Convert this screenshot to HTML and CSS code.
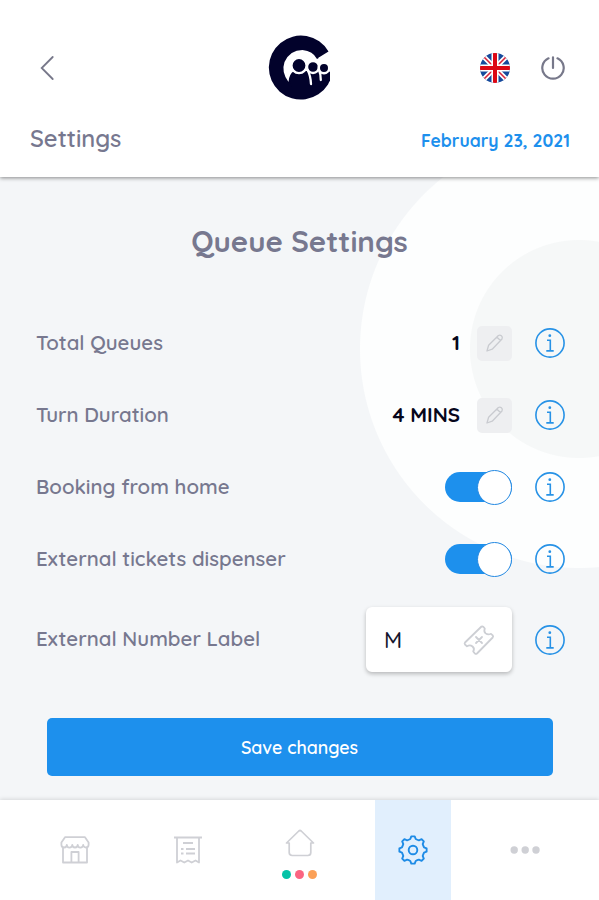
FILE: index.html
```html
<!DOCTYPE html>
<html lang="en">
<head>
  <meta charset="UTF-8" />
  <meta name="viewport" content="width=device-width, initial-scale=1.0"/>
  <title>Queue Settings</title>
  <link rel="stylesheet" href="styles.css">
</head>
<body>
  <!-- shared icons -->
  <svg class="sprite" width="0" height="0">
    <symbol id="icon-info" viewBox="0 0 30 30">
      <circle cx="15" cy="15" r="14.1" fill="none" stroke="currentColor" stroke-width="1.6"/>
      <circle cx="14.8" cy="7.7" r="1.4" fill="currentColor"/>
      <path d="M12 12.2h3.3v10.5M11.3 22.9h7.4" fill="none" stroke="currentColor" stroke-width="1.6"/>
    </symbol>
    <symbol id="icon-pencil" viewBox="0 0 20 20">
      <path d="M2 18l1.6-5.7L13.4 2.5q1.5-1 3 .3t.6 3.2L7.2 16.2zM12 4.2l3.7 3.6" fill="none" stroke="currentColor" stroke-width="1.3" stroke-linejoin="round"/>
    </symbol>
  </svg>

  <header class="header">
    <div class="topbar">
      <button class="icon-btn back">
        <svg width="14" height="26" viewBox="0 0 14 26"><path d="M12.7 2L1.7 13l11 11" fill="none" stroke="currentColor" stroke-width="1.8" stroke-linecap="round"/></svg>
      </button>
      <svg class="logo" width="64" height="66" viewBox="0 0 64 66">
        <path d="M60.5 16.5A32 32 0 1 0 60 49.5L62 45L61 39L62 31L50 23Z" fill="#02022b"/>
        <path d="M20.5 47Q13 37 16.5 27Q22 15 34.5 15Q45 16 49 24L64 16V36H26Q21 39 20.5 47Z" fill="#fff"/>
        <path d="M22 46Q23 39 31 39.5Q37 40 41 38L50 37L62 37V46L50 52H24Z" fill="#02022b"/>
        <g fill="#02022b" stroke="#fff" stroke-width="2.4">
          <circle cx="31" cy="30.5" r="7.6"/>
          <circle cx="45" cy="32" r="6"/>
          <circle cx="56" cy="33" r="5.2"/>
        </g>
        <path d="M39.5 35Q42.5 40 43 49M51 35Q52.8 39 52.8 45" fill="none" stroke="#fff" stroke-width="2.3" stroke-linecap="round"/>
      </svg>
      <div class="actions">
        <svg width="30" height="30" viewBox="0 0 30 30">
          <clipPath id="round"><circle cx="15" cy="15" r="15"/></clipPath>
          <g clip-path="url(#round)">
            <path d="M0 0h30v30H0z" fill="#164a9c"/>
            <path d="M2 2l26 26M28 2L2 28" stroke="#fff" stroke-width="5"/>
            <path d="M2 2l26 26M28 2L2 28" stroke="#d8253a" stroke-width="1.6"/>
            <path d="M15 0v30M0 15h30" stroke="#fff" stroke-width="7"/>
            <path d="M15 0v30M0 15h30" stroke="#dc0714" stroke-width="4"/>
          </g>
        </svg>
        <button class="icon-btn">
          <svg width="24" height="24" viewBox="0 0 24 24" fill="none" stroke="currentColor" stroke-width="2.2" stroke-linecap="round"><path d="M7.5 2.3a10.7 10.7 0 1 0 9 0M12 1.3v10.7"/></svg>
        </button>
      </div>
    </div>
    <div class="subbar">
      <span class="page-name">Settings</span>
      <span class="date">February 23, 2021</span>
    </div>
  </header>

  <main class="content">
    <h1>Queue Settings</h1>
    <div class="rows">
      <div class="row">
        <span class="label">Total Queues</span>
        <b class="value">1</b>
        <button class="edit"><svg width="20" height="20"><use href="#icon-pencil"/></svg></button>
        <svg class="info" width="30" height="30"><use href="#icon-info"/></svg>
      </div>
      <div class="row">
        <span class="label">Turn Duration</span>
        <b class="value">4 MINS</b>
        <button class="edit"><svg width="20" height="20"><use href="#icon-pencil"/></svg></button>
        <svg class="info" width="30" height="30"><use href="#icon-info"/></svg>
      </div>
      <div class="row">
        <span class="label">Booking from home</span>
        <span class="toggle"><span class="knob"></span></span>
        <svg class="info" width="30" height="30"><use href="#icon-info"/></svg>
      </div>
      <div class="row">
        <span class="label">External tickets dispenser</span>
        <span class="toggle"><span class="knob"></span></span>
        <svg class="info" width="30" height="30"><use href="#icon-info"/></svg>
      </div>
      <div class="row row-input">
        <span class="label">External Number Label</span>
        <div class="field">
          <span>M</span>
          <svg width="32" height="32" viewBox="0 0 32 32" fill="none" stroke="#cdcfd4" stroke-width="1.8" stroke-linejoin="round" stroke-linecap="round">
            <path d="M2 18.5L18.5 2.5Q19.5 2 20.5 3L21.8 4.5Q20.5 7.5 22.7 9.4Q25 11.2 28 9.8L29.7 11.3Q30.6 12.5 29.7 13.5L14 29.5Q12.8 30.3 11.8 29.3L10.2 27.5Q12 24.5 9.5 22.5Q7 20.5 4 22.3L2 20.5Q1.2 19.5 2 18.5Z"/>
            <path d="M13 13l6 6M19 13l-6 6"/>
          </svg>
        </div>
        <svg class="info" width="30" height="30"><use href="#icon-info"/></svg>
      </div>
    </div>
    <button class="save">Save changes</button>
  </main>

  <nav class="nav">
    <a class="nav-item">
      <svg width="30" height="28" viewBox="0 0 30 28" fill="none" stroke="currentColor" stroke-width="1.8" stroke-linejoin="round">
        <path d="M5 1.2h20l3.6 5.3v2.3a2.7 2.7 0 0 1-5.4 0 2.7 2.7 0 0 1-5.5 0 2.7 2.7 0 0 1-5.4 0 2.7 2.7 0 0 1-5.5 0 2.7 2.7 0 0 1-5.4 0V6.5zM3 12v14.5h24V12M11.4 26.5V16h7.2v10.5"/>
      </svg>
    </a>
    <a class="nav-item">
      <svg width="30" height="28" viewBox="0 0 30 28" fill="none" stroke="currentColor" stroke-width="1.8" stroke-linejoin="round">
        <path d="M1 1.5h28M4 1.5v25l3.5-2 3.8 2 3.7-2 3.7 2 3.8-2 3.5 2v-25M10 7h10M8 13h2.5M13 13h9M8 17.5h2.5M13 17.5h9"/>
      </svg>
    </a>
    <a class="nav-item home">
      <svg width="30" height="28" viewBox="0 0 30 28" fill="none" stroke="currentColor" stroke-width="1.7" stroke-linejoin="round" stroke-linecap="round">
        <path d="M1.5 14L13.8 2q1.2-1 2.4 0L28.5 14h-2.7v9.5q0 3-3 3h-15.6q-3 0-3-3V14z"/>
      </svg>
      <span class="dots"><i class="green"></i><i class="pink"></i><i class="orange"></i></span>
    </a>
    <a class="nav-item active">
      <svg width="32" height="32" viewBox="-16 -16 32 32" fill="none" stroke="currentColor" stroke-width="1.9" stroke-linejoin="round">
        <path d="M-1.7-13.6H1.7L2.7-11Q4.2-10.2 5.9-9.7L8.6-10.8L10.8-8.6L9.7-5.9Q10.2-4.2 11-2.7L13.6-1.7V1.7L11 2.7Q10.2 4.2 9.7 5.9L10.8 8.6L8.6 10.8L5.9 9.7Q4.2 10.2 2.7 11L1.7 13.6H-1.7L-2.7 11Q-4.2 10.2-5.9 9.7L-8.6 10.8L-10.8 8.6L-9.7 5.9Q-10.2 4.2-11 2.7L-13.6 1.7V-1.7L-11-2.7Q-10.2-4.2-9.7-5.9L-10.8-8.6L-8.6-10.8L-5.9-9.7Q-4.2-10.2-2.7-11Z"/>
        <circle r="4.3"/>
      </svg>
    </a>
    <a class="nav-item">
      <svg width="30" height="8" viewBox="0 0 30 8" fill="currentColor"><circle cx="4.2" cy="4" r="3.7"/><circle cx="15.2" cy="4" r="3.7"/><circle cx="26" cy="4" r="3.7"/></svg>
    </a>
  </nav>
</body>
</html>
```

FILE: styles.css
```css
* {
  box-sizing: border-box;
}

body {
  margin: 0;
  height: 900px;
  display: flex;
  flex-direction: column;
  font-family: Quicksand, Lato, sans-serif;
  color: #77788f;
  background: #f4f6f8;
  overflow: hidden;
}

button {
  font-family: inherit;
  border: none;
  padding: 0;
}

svg {
  display: block;
  flex-shrink: 0;
}

.sprite {
  position: absolute;
}

/* header */
.header {
  height: 177px;
  background: #fff;
  box-shadow: 0 1px 4px rgba(0, 0, 0, 0.45);
  z-index: 1;
}

.topbar {
  display: grid;
  grid-template-columns: 1fr 64px 1fr;
  align-items: center;
  height: 102px;
  padding: 34px 34px 0 40px;
}

.logo {
  margin-left: -3px;
}

.icon-btn {
  background: none;
  color: #77788a;
}

.back {
  justify-self: start;
}

.actions {
  display: flex;
  justify-content: flex-end;
  align-items: center;
  gap: 31px;
}

.subbar {
  display: flex;
  justify-content: space-between;
  align-items: center;
  padding: 20px 29px 0 30px;
}

.page-name {
  font-size: 23.7px;
  line-height: 32px;
  font-weight: 600;
}

.date {
  font-size: 17.5px;
  font-weight: 700;
  color: #1d90ed;
  padding-top: 3px;
}

/* settings */
.content {
  height: 623px;
  /* ring behind the settings */
  background: radial-gradient(circle at 579px 172px, #f6f8f8 108.5px, #fdfefe 109.5px, #fdfefe 218.5px, #f4f6f8 219.5px);
}

h1 {
  margin: 0;
  padding-top: 45px;
  font-size: 29.5px;
  line-height: 38px;
  font-weight: 700;
  text-align: center;
}

.rows {
  padding: 47px 34px 0 36px;
}

.row {
  height: 72px;
  display: flex;
  align-items: center;
}

.row-input {
  height: 89px;
}

.label {
  flex: 1;
  padding-bottom: 2px;
  font-size: 20.4px;
  font-weight: 600;
}

.value {
  padding-bottom: 2px;
  font-size: 20.5px;
  color: #06061b;
  margin-right: 17px;
}

.edit {
  width: 35px;
  height: 35px;
  display: flex;
  align-items: center;
  justify-content: center;
  background: #eeeff1;
  border-radius: 5px;
  color: #c9cbd0;
}

.info {
  margin-left: 23px;
  color: #2792e6;
}

.toggle {
  display: flex;
  align-items: center;
  justify-content: flex-end;
  width: 67px;
  height: 30px;
  border-radius: 15px;
  background: #1d90ed;
}

.knob {
  width: 35px;
  height: 35px;
  flex-shrink: 0;
  background: #fff;
  border: 1.5px solid #2489e2;
  border-radius: 50%;
}

.field {
  width: 146px;
  height: 65px;
  padding: 0 17px 0 18px;
  display: flex;
  align-items: center;
  justify-content: space-between;
  background: #fff;
  border-radius: 6px;
  box-shadow: 0 2px 4px rgba(0, 0, 0, 0.25);
  color: #14142b;
  font-size: 22px;
  font-weight: 500;
}

.save {
  display: block;
  width: 506px;
  height: 58px;
  margin: 34px auto 0;
  border-radius: 5px;
  background: #1d90ed;
  color: #fff;
  font-size: 17.8px;
  font-weight: 600;
}

/* bottom navigation */
.nav {
  height: 100px;
  padding: 0 18px 0 19px;
  display: flex;
  justify-content: space-around;
  background: #fff;
  box-shadow: 0 -1px 4px rgba(0, 0, 0, 0.12);
}

.nav-item {
  width: 76px;
  display: flex;
  flex-direction: column;
  align-items: center;
  justify-content: center;
  color: #cfd0d5;
}

.home {
  gap: 13px;
  padding-top: 8px;
}

.dots {
  display: flex;
  gap: 4px;
}

.dots i {
  width: 9px;
  height: 9px;
  border-radius: 50%;
}

.green {
  background: #05c3a7;
}

.pink {
  background: #fb6582;
}

.orange {
  background: #fba057;
}

.active {
  margin-left: 1px;
  margin-right: -1px;
  background: #e1effd;
  color: #1d8be6;
}
```
